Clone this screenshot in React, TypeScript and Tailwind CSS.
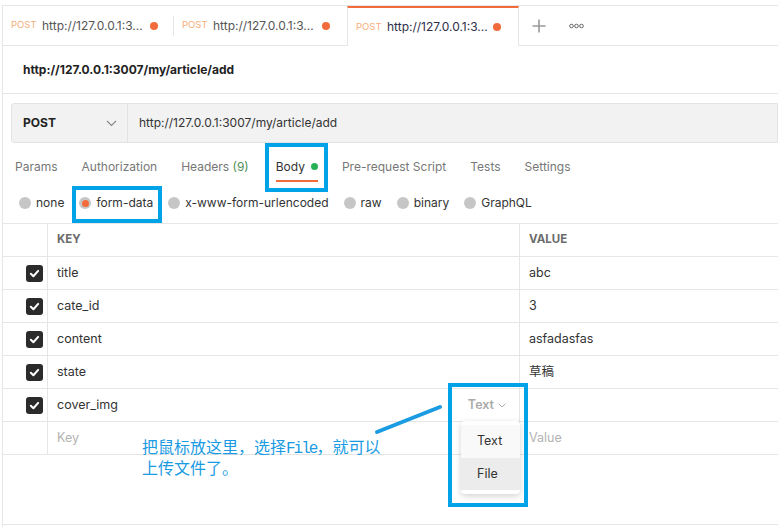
import React from 'react'

const tabs = [
  { w: 'w-[171px]', active: false, sep: true },
  { w: 'w-[173px]', active: false, sep: false },
  { w: 'w-[172px]', active: true, sep: false },
]

const reqTabs = ['Params', 'Authorization', 'Headers', 'Body', 'Pre-request Script', 'Tests', 'Settings']

const bodyTypes = ['none', 'form-data', 'x-www-form-urlencoded', 'raw', 'binary', 'GraphQL']

const rows = [
  { key: 'title', value: 'abc' },
  { key: 'cate_id', value: '3' },
  { key: 'content', value: 'asfadasfas' },
  { key: 'state', value: '草稿' },
  { key: 'cover_img', value: '' },
]

const Check = () => (
  <div className="w-[17px] h-[17px] rounded-[3px] bg-[#2b2b2b] flex items-center justify-center">
    <svg width="11" height="11" viewBox="0 0 12 12">
      <path d="M2 6.3 L4.8 9 L10 3.2" fill="none" stroke="white" strokeWidth="2.2" strokeLinecap="round" strokeLinejoin="round" />
    </svg>
  </div>
)

const App: React.FC = () => {
  return (
    <div className="w-[778px] h-[527px] overflow-hidden bg-white relative font-['Inter','Noto_Sans_CJK_SC',sans-serif] text-[#333]">
      <div className="ml-[2px] h-full border-l border-[#e6e6e6]">
        {/* 顶部标签栏 */}
        <div className="mt-[5px] h-[41px] flex border-t border-b border-[#e6e6e6]">
          {tabs.map((t, i) => (
            <div
              key={i}
              className={`${t.w} flex items-center pl-[8px] pr-[17px] ${t.active ? '-mb-px bg-white border-x border-[#e6e6e6] border-t-2 border-t-[#f26b3a] pl-[7px]' : ''}`}
            >
              <span className="text-[9.5px] text-[#f7ae7a] w-[31px]">POST</span>
              <span className={`text-[12px] flex-1 ${t.active ? 'text-[#2e2e48]' : 'text-[#555]'}`}>http://127.0.0.1:3...</span>
              <span className="w-[8px] h-[8px] rounded-full bg-[#f26b3a]" />
              {t.sep && <span className="ml-[15px] -mr-[17px] w-px h-[20px] bg-[#e6e6e6]" />}
            </div>
          ))}
          <div className="flex items-center pl-[12px]">
            <svg width="16" height="16" viewBox="0 0 16 16">
              <path d="M8 1.5 V14.5 M1.5 8 H14.5" stroke="#999" strokeWidth="1.6" />
            </svg>
            <svg className="ml-[22px]" width="15" height="6" viewBox="0 0 15 6">
              <circle cx="2.5" cy="3" r="1.8" fill="none" stroke="#666" strokeWidth="1" />
              <circle cx="7.5" cy="3" r="1.8" fill="none" stroke="#666" strokeWidth="1" />
              <circle cx="12.5" cy="3" r="1.8" fill="none" stroke="#666" strokeWidth="1" />
            </svg>
          </div>
        </div>

        {/* 请求名称 */}
        <div className="h-[48px] flex items-center pl-[20px] border-b border-[#e6e6e6] text-[12px] font-bold text-[#222]">
          http://127.0.0.1:3007/my/article/add
        </div>

        {/* 地址栏 */}
        <div className="mt-[9px] ml-[8px] h-[40px] flex border border-[#e3e3e3] bg-[#f2f2f2] rounded-l-[3px]">
          <div className="w-[116px] flex items-center justify-between pl-[11px] pr-[10px] border-r border-[#e3e3e3] text-[12px] font-bold text-[#222]">
            POST
            <svg width="11" height="7" viewBox="0 0 11 7">
              <path d="M1 1 L5.5 5.5 L10 1" fill="none" stroke="#888" strokeWidth="1.1" />
            </svg>
          </div>
          <div className="flex items-center pl-[11px] text-[12px] text-[#333]">http://127.0.0.1:3007/my/article/add</div>
        </div>

        {/* 请求选项卡 */}
        <div className="h-[47px] flex items-center pl-[12px] gap-[24px] text-[12px] text-[#777]">
          {reqTabs.map((t) => (
            <div key={t} className={`relative flex items-center ${t === 'Body' ? 'ml-[3px]' : ''}`}>
              {t === 'Headers' && (
                <span>
                  Headers <span className="text-[#4f8f5c]">(9)</span>
                </span>
              )}
              {t === 'Body' && (
                <>
                  <span className="text-[#333]">Body</span>
                  <span className="ml-[6px] w-[7px] h-[7px] rounded-full bg-[#27b157]" />
                  <span className="absolute left-0 right-0 -bottom-[6px] h-[2px] bg-[#f26b3a]" />
                </>
              )}
              {t !== 'Headers' && t !== 'Body' && <span>{t}</span>}
            </div>
          ))}
        </div>

        {/* body 类型 */}
        <div className="h-[33px] pb-[7px] flex items-center pl-[16px] text-[12px] text-[#333]">
          {bodyTypes.map((b) => (
            <div key={b} className="flex items-center mr-[15px]">
              <span className="w-[12px] h-[12px] rounded-full bg-[#c6c6c6] flex items-center justify-center">
                {b === 'form-data' && <span className="w-[7px] h-[7px] rounded-full bg-[#f26b3a]" />}
              </span>
              <span className="ml-[5px]">{b}</span>
            </div>
          ))}
        </div>

        {/* 表格 */}
        <div className="border-t border-b border-[#e6e6e6] h-[302px] text-[12.5px]">
          <div className="flex h-[33px] border-b border-[#e6e6e6] text-[11.5px] font-bold text-[#6b6b6b]">
            <div className="w-[45px] border-r border-[#e6e6e6]" />
            <div className="w-[472px] border-r border-[#e6e6e6] flex items-center pl-[9px]">KEY</div>
            <div className="flex-1 flex items-center pl-[9px]">VALUE</div>
          </div>
          {rows.map((r) => (
            <div key={r.key} className="flex h-[33px] border-b border-[#e6e6e6]">
              <div className="w-[45px] border-r border-[#e6e6e6] flex items-center justify-end pr-[4px]">
                <Check />
              </div>
              <div className="w-[472px] border-r border-[#e6e6e6] flex items-center justify-between pl-[9px] pr-[13px]">
                <span>{r.key}</span>
                {r.key === 'cover_img' && (
                  <span className="flex items-center font-semibold text-[#aaa]">
                    Text
                    <svg className="ml-[4px]" width="8" height="5" viewBox="0 0 8 5">
                      <path d="M0.5 0.5 L4 4 L7.5 0.5" fill="none" stroke="#aaa" strokeWidth="1" />
                    </svg>
                  </span>
                )}
              </div>
              <div className="flex-1 flex items-center pl-[9px]">{r.value}</div>
            </div>
          ))}
          <div className="flex h-[33px] border-b border-[#e6e6e6] text-[#b3b3b3]">
            <div className="w-[45px] border-r border-[#e6e6e6]" />
            <div className="w-[472px] border-r border-[#e6e6e6] flex items-center pl-[9px]">Key</div>
            <div className="flex-1 flex items-center pl-[9px]">Value</div>
          </div>
        </div>
      </div>

      {/* 下拉菜单 */}
      <div className="absolute left-[461px] top-[421px] w-[59px] py-[4px] bg-white rounded-[4px] shadow-[0_2px_6px_rgba(0,0,0,0.18)] text-[12.5px] text-[#333]">
        <div className="h-[33px] flex items-center pl-[16px] bg-[#f9f9f9]">Text</div>
        <div className="h-[32px] flex items-center pl-[16px] bg-[#ececec]">File</div>
      </div>

      {/* 标注框 */}
      <div className="absolute left-[265px] top-[143px] w-[63px] h-[49px] border-4 border-[#00a2e8]" />
      <div className="absolute left-[72px] top-[186px] w-[90px] h-[37px] border-4 border-[#00a2e8]" />
      <div className="absolute left-[448px] top-[383px] w-[80px] h-[124px] border-4 border-[#00a2e8]" />

      <svg className="absolute left-0 top-0" width="778" height="527">
        <path d="M377 432 L440 407" stroke="#1a9be2" strokeWidth="4" strokeLinecap="round" />
      </svg>

      <div className="absolute left-[142px] top-[436px] text-[16px] text-[#1a9be2] font-['Noto_Sans_CJK_SC',monospace]">
        <div className="h-[21px] leading-[21px] whitespace-nowrap">
          把鼠标放这里，选择<span className="font-['Liberation_Mono',monospace] tracking-[-2px]">File</span>，就可以
        </div>
        <div className="h-[21px] leading-[21px]">上传文件了。</div>
      </div>
    </div>
  )
}

export default App
